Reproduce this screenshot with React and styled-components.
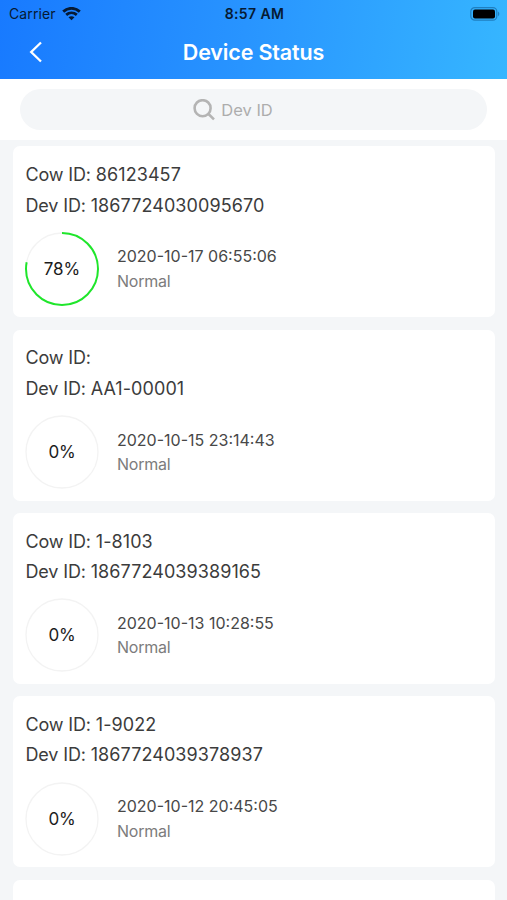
import { createGlobalStyle, styled } from "styled-components"

const GlobalStyle = createGlobalStyle`
  * {
    box-sizing: border-box;
  }
  body {
    margin: 0;
    background: #f4f6f8;
    font-family: Inter, "Liberation Sans", sans-serif;
  }
`

const Screen = styled.div`
  height: 900px;
  overflow: hidden;
  display: flex;
  flex-direction: column;
`

const Header = styled.header`
  flex: none;
  height: 79.3px;
  background: linear-gradient(98deg, #187aff 0%, #2894ff 48%, #36b6ff 100%);
`

const StatusBar = styled.div`
  height: 27px;
  padding: 0 7px 0 9px;
  display: grid;
  grid-template-columns: 1fr auto 1fr;
  align-items: center;
  color: #061a33;
`

const Carrier = styled.div`
  display: flex;
  align-items: center;
  gap: 6px;
  font-size: 14px;
  letter-spacing: 0.1px;
`

const Clock = styled.div`
  font-size: 14px;
  font-weight: 600;
  letter-spacing: 0.4px;
`

const Battery = styled.svg`
  justify-self: end;
`

const NavBar = styled.div`
  height: 50px;
  padding: 0 28px;
  display: grid;
  grid-template-columns: 1fr auto 1fr;
  align-items: center;
`

const Title = styled.h1`
  margin: 0;
  color: white;
  font-size: 21.5px;
  font-weight: 600;
  letter-spacing: -0.15px;
`

const SearchArea = styled.div`
  flex: none;
  height: 60.7px;
  padding: 9.5px 20px;
  background: white;
`

const SearchBox = styled.div`
  height: 41.5px;
  border-radius: 21px;
  background: #f4f6f8;
  display: flex;
  align-items: center;
  justify-content: center;
  gap: 6px;
  padding-right: 41px;
  color: #adadad;
  font-size: 16.5px;
`

const List = styled.main`
  flex: none;
  padding: 6.5px 12px 0 13px;
  display: flex;
  flex-direction: column;
  gap: 12.3px;
`

const Card = styled.section`
  height: 171px;
  padding: 13.5px 12px 0;
  border-radius: 7px;
  background: white;
`

const IdLine = styled.div`
  height: 30.6px;
  padding-left: 0.5px;
  line-height: 30.6px;
  color: #3c3c3c;
  font-size: 18px;
  letter-spacing: 0.08px;
  white-space: pre;
`

const Label = styled.span`
  letter-spacing: -0.15px;
`

const Details = styled.div`
  margin-top: 10.6px;
  display: flex;
  align-items: center;
  gap: 18px;
`

const Ring = styled.div`
  display: grid;
  width: 74px;
  height: 74px;

  > * {
    grid-area: 1 / 1;
  }
`

const Percent = styled.span`
  place-self: center;
  color: #1c1c1c;
  font-size: 17px;
  letter-spacing: -0.1px;
`

const Info = styled.div`
  color: #484848;
  font-size: 16px;
  line-height: 24.5px;
`

const State = styled.div`
  color: #7c7c7c;
  letter-spacing: -0.25px;
`

const devices = [
  { cow: "86123457", dev: "1867724030095670", level: 78, time: "2020-10-17 06:55:06" },
  { cow: "", dev: "AA1-00001", level: 0, time: "2020-10-15 23:14:43" },
  { cow: "1-8103", dev: "1867724039389165", level: 0, time: "2020-10-13 10:28:55" },
  { cow: "1-9022", dev: "1867724039378937", level: 0, time: "2020-10-12 20:45:05" },
]

const WifiIcon = () => (
  <svg width="19" height="14" viewBox="0 0 19 14" fill="none" stroke="#061a33" strokeWidth="2.8">
    <path d="M1.2 4.6C6 .2 13 .2 17.8 4.6" />
    <path d="M4.2 7.9c3.1-2.8 7.5-2.8 10.6 0" />
    <path d="M9.5 13.3 6.5 10.3c1.7-1.5 4.3-1.5 6 0z" fill="#061a33" stroke="none" />
  </svg>
)

const BatteryIcon = () => (
  <Battery width="30" height="14" viewBox="0 0 30 14">
    <rect x="0.8" y="0.6" width="26" height="12.6" rx="4" fill="none" stroke="#1f7fc0" strokeWidth="1.2" />
    <rect x="3" y="2.6" width="22" height="8.8" rx="2" fill="#000" />
    <path d="M28 4.6c1.8.8 1.8 3.8 0 4.6z" fill="#1f7fc0" />
  </Battery>
)

const BackIcon = () => (
  <svg width="16" height="22" viewBox="0 0 16 22" fill="none" stroke="white" strokeWidth="2.3">
    <path d="M13 1.5 3.2 11 13 20.5" />
  </svg>
)

const SearchIcon = () => (
  <svg width="22" height="22" viewBox="0 0 22 22" fill="none" stroke="#b4b4b4" strokeWidth="2.6">
    <circle cx="9.6" cy="9.2" r="8" />
    <path d="M15.2 14.8 21 20.4" />
  </svg>
)

const BatteryRing = ({ level }) => (
  <Ring>
    <svg width="74" height="74" viewBox="0 0 74 74" fill="none">
      <circle cx="37" cy="37" r="36" stroke="#f3f3f3" strokeWidth="1.3" />
      {level > 0 && (
        <circle
          cx="37"
          cy="37"
          r="36"
          stroke="#1fe62b"
          strokeWidth="2"
          pathLength="100"
          strokeDasharray={`${level} 100`}
          transform="rotate(-90 37 37)"
        />
      )}
    </svg>
    <Percent>{level}%</Percent>
  </Ring>
)

const App = () => {
  return (
    <Screen>
      <GlobalStyle />
      <Header>
        <StatusBar>
          <Carrier>
            Carrier
            <WifiIcon />
          </Carrier>
          <Clock>8:57 AM</Clock>
          <BatteryIcon />
        </StatusBar>
        <NavBar>
          <BackIcon />
          <Title>Device Status</Title>
        </NavBar>
      </Header>
      <SearchArea>
        <SearchBox>
          <SearchIcon />
          Dev ID
        </SearchBox>
      </SearchArea>
      <List>
        {devices.map((device) => (
          <Card key={device.dev}>
            <IdLine>
              <Label>Cow ID: </Label>
              {device.cow}
            </IdLine>
            <IdLine>
              <Label>Dev ID: </Label>
              {device.dev}
            </IdLine>
            <Details>
              <BatteryRing level={device.level} />
              <Info>
                {device.time}
                <State>Normal</State>
              </Info>
            </Details>
          </Card>
        ))}
        <Card />
      </List>
    </Screen>
  )
}

export default App
